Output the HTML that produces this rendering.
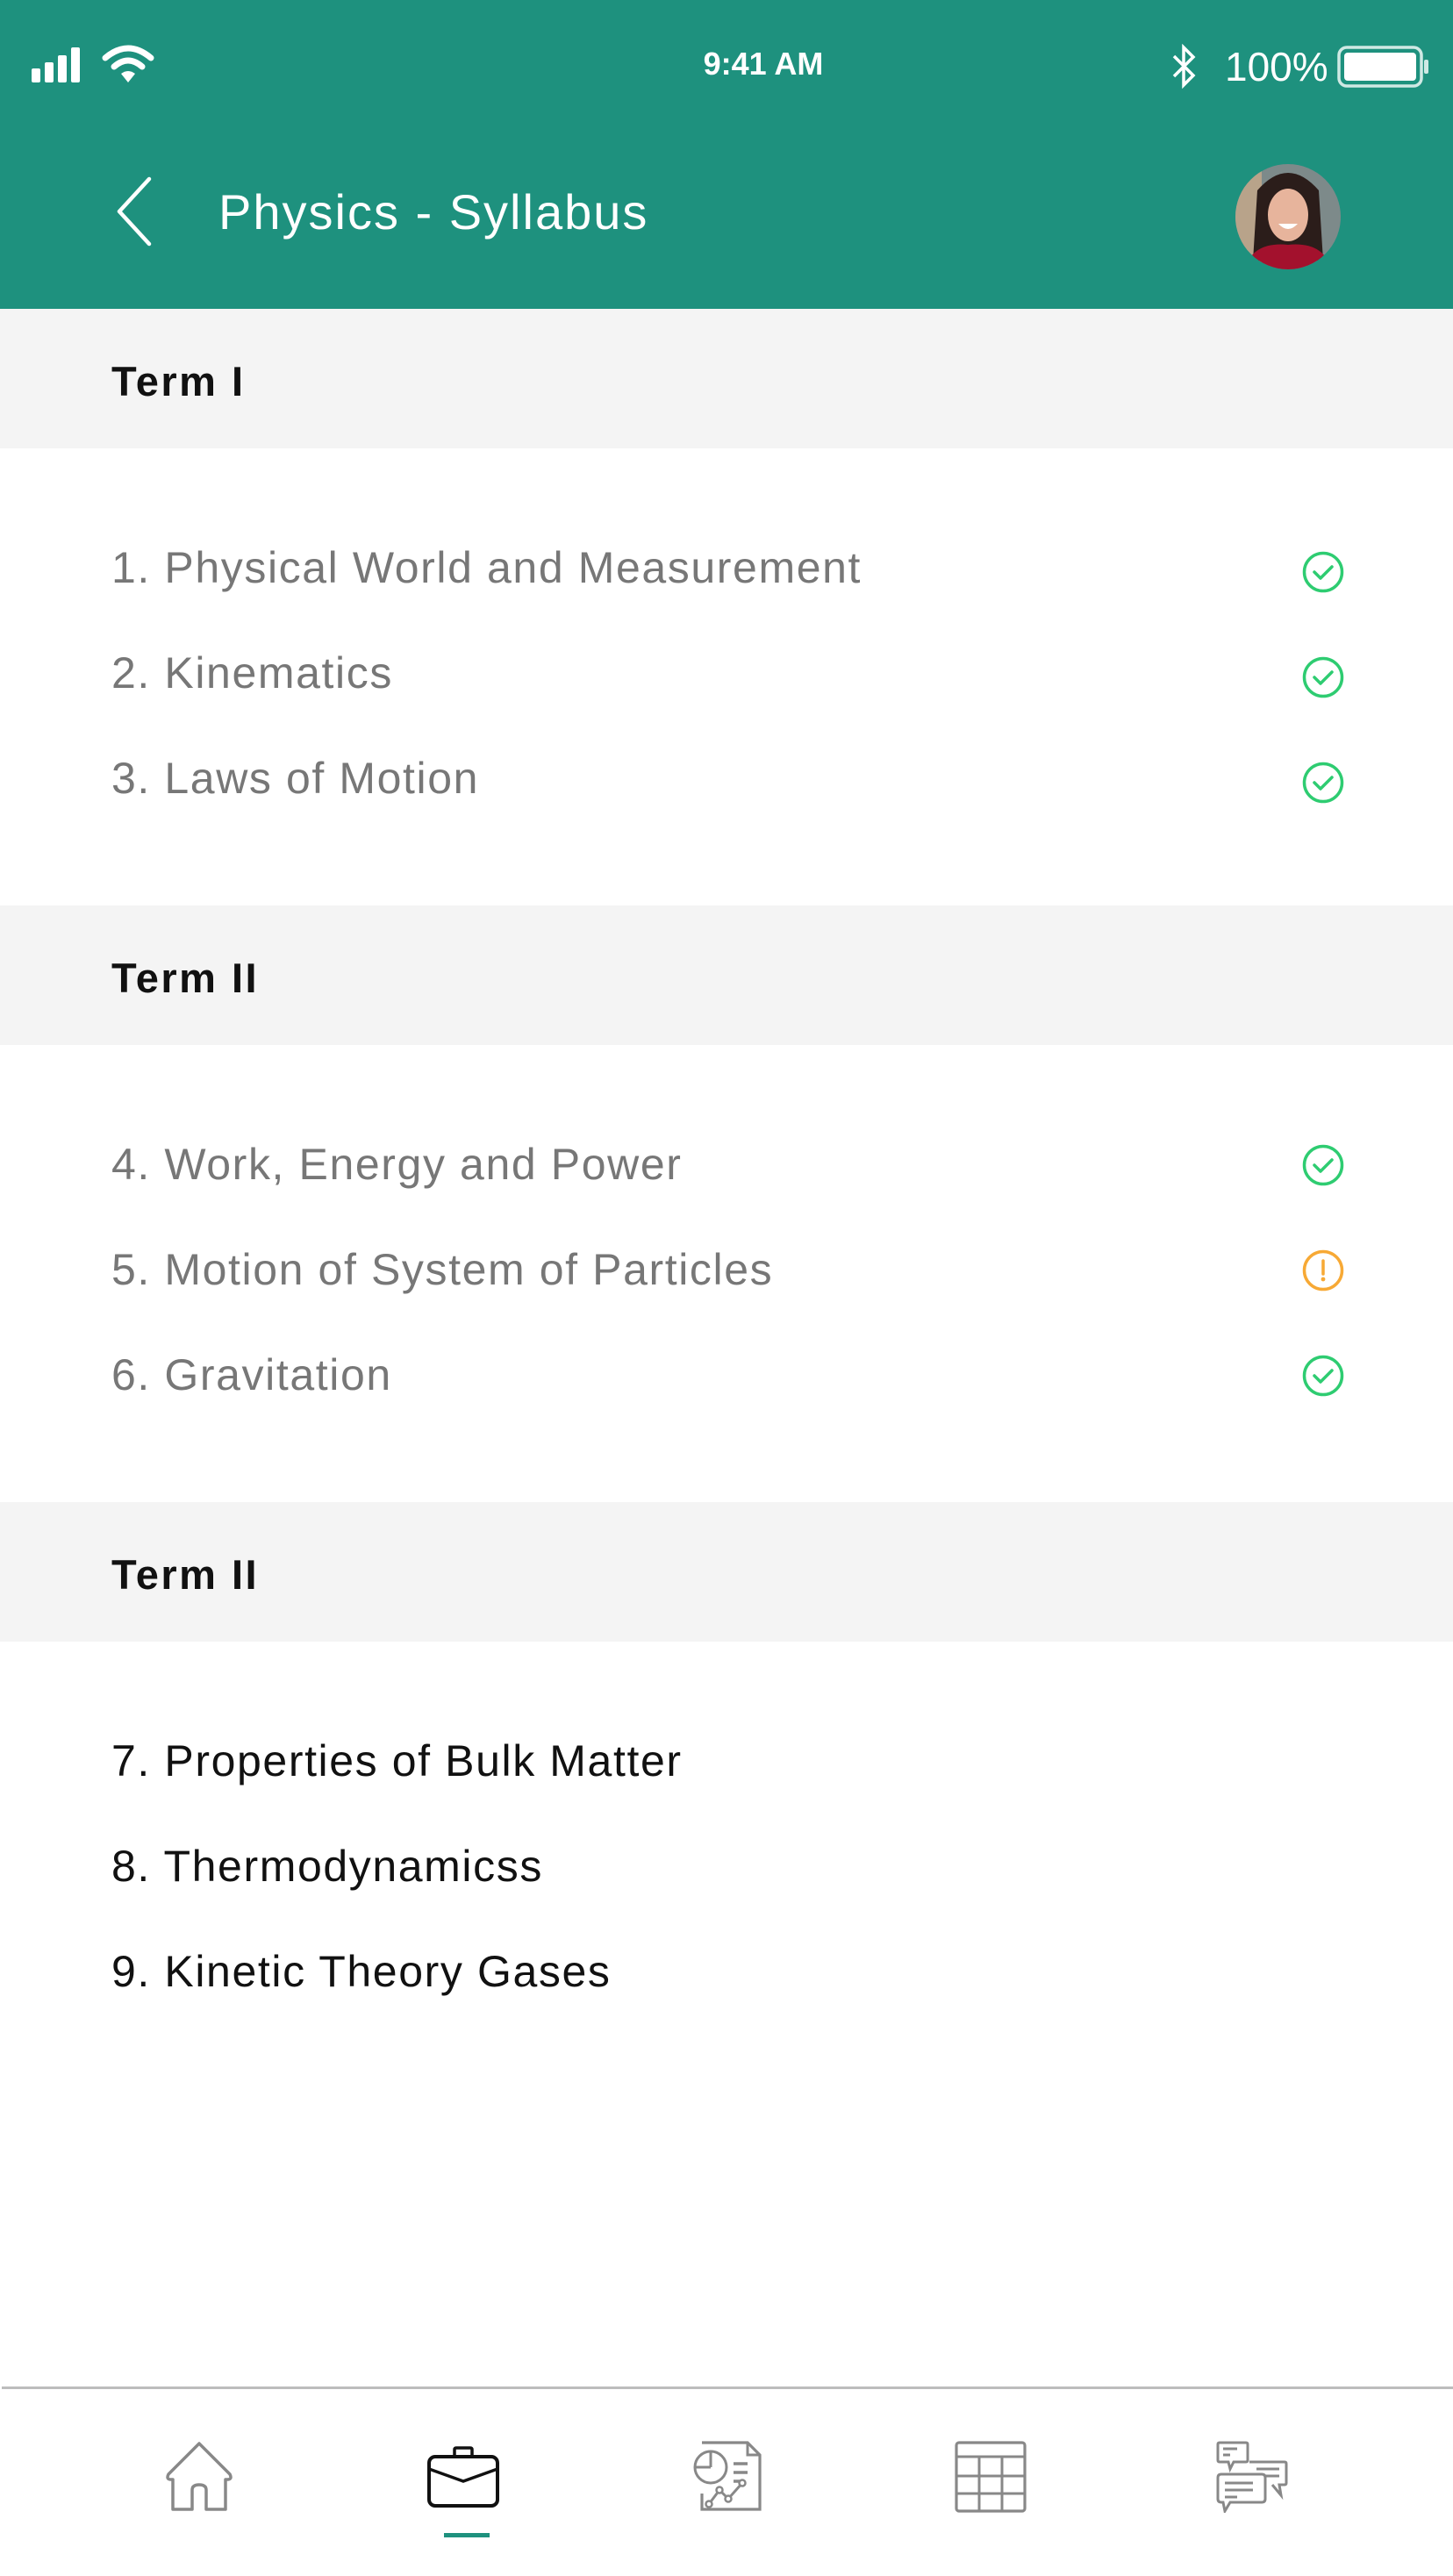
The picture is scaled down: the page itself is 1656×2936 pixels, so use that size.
<!DOCTYPE html>
<html><head><meta charset="utf-8">
<style>
*{margin:0;padding:0;box-sizing:border-box}
html,body{width:1656px;height:2936px;background:#fff;overflow:hidden;font-family:"Liberation Sans",sans-serif;position:relative}
.hdr{position:absolute;left:0;top:0;width:1656px;height:352px;background:#1e917e}
.abs{position:absolute}
.band{position:absolute;left:0;width:1656px;height:159px;background:#f4f4f4}
.term{position:absolute;left:127px;font-size:47px;font-weight:bold;color:#111;letter-spacing:2.5px;line-height:1}
.item{position:absolute;left:127px;font-size:50px;color:#777;letter-spacing:1.6px;line-height:1;white-space:nowrap}
.item.dark{color:#111}
.ic{position:absolute;left:1484px;width:48px;height:48px}
</style></head><body>
<div class="hdr"></div>
<svg class="abs" style="left:34px;top:52px" width="72" height="42" viewBox="0 0 72 42">
<rect x="2" y="26" width="10" height="16" rx="2" fill="#fff"/><rect x="17" y="19" width="10" height="23" rx="2" fill="#fff"/><rect x="32" y="11" width="10" height="31" rx="2" fill="#fff"/><rect x="47" y="2" width="10" height="40" rx="2" fill="#fff"/></svg>
<svg class="abs" style="left:116px;top:50px" width="60" height="46" viewBox="0 0 60 46">
<path d="M4 16 Q30 -6 56 16" stroke="#fff" stroke-width="7" fill="none" stroke-linecap="round"/>
<path d="M14 26 Q30 12 46 26" stroke="#fff" stroke-width="7" fill="none" stroke-linecap="round"/>
<path d="M22 34 L30 44 L38 34 Q30 28 22 34Z" fill="#fff"/></svg>
<div class="abs" style="left:780px;top:53px;font-size:36px;font-weight:bold;color:#fff;width:180px;text-align:center;line-height:40px">9:41 AM</div>
<svg class="abs" style="left:1334px;top:50px" width="30" height="52" viewBox="0 0 30 52">
<path d="M4 14 L26 36 L15 47 L15 4 L26 15 L4 37" stroke="#fff" stroke-width="3.5" fill="none"/></svg>
<div class="abs" style="left:1396px;top:50px;font-size:46px;color:#fff;line-height:52px">100%</div>
<svg class="abs" style="left:1524px;top:52px" width="106" height="50" viewBox="0 0 106 50">
<rect x="2" y="2" width="94" height="44" rx="9" fill="none" stroke="#cfe9e4" stroke-width="3.5"/>
<rect x="8" y="8" width="82" height="32" rx="4" fill="#fff"/>
<rect x="99" y="16" width="5" height="16" rx="2" fill="#cfe9e4"/></svg>
<svg class="abs" style="left:128px;top:200px" width="50" height="82" viewBox="0 0 50 82">
<path d="M42 4 L8 41 L42 78" stroke="#fff" stroke-width="4.5" fill="none" stroke-linecap="round" stroke-linejoin="round"/></svg>
<div class="abs" style="left:249px;top:212px;font-size:56px;color:#fff;letter-spacing:2px;line-height:60px">Physics - Syllabus</div>
<svg class="abs" style="left:1408px;top:187px" width="120" height="120" viewBox="0 0 120 120">
<defs><clipPath id="c"><circle cx="60" cy="60" r="60"/></clipPath></defs>
<g clip-path="url(#c)">
<rect width="120" height="120" fill="#7d8a8a"/>
<rect x="0" y="0" width="30" height="120" fill="#b8a38a"/>
<path d="M25 30 Q60 -10 95 30 L100 110 L20 110Z" fill="#2b1d1a"/>
<ellipse cx="60" cy="58" rx="23" ry="30" fill="#e7b49c"/>
<path d="M49 68 Q60 80 71 68Z" fill="#fff"/>
<path d="M10 120 Q20 88 60 92 Q100 88 110 120Z" fill="#a3112d"/>
</g></svg>
<div class="band" style="top:352px"></div>
<div class="term" style="top:411px">Term I</div>
<div class="item" style="top:622px">1. Physical World and Measurement</div>
<div class="item" style="top:742px">2. Kinematics</div>
<div class="item" style="top:862px">3. Laws of Motion</div>
<svg class="ic" style="top:628px" viewBox="0 0 48 48"><circle cx="24" cy="24" r="21.5" fill="none" stroke="#2ecc71" stroke-width="3.5"/><path d="M14 24 L21 31 L34 18" fill="none" stroke="#2ecc71" stroke-width="3.5" stroke-linecap="round" stroke-linejoin="round"/></svg>
<svg class="ic" style="top:748px" viewBox="0 0 48 48"><circle cx="24" cy="24" r="21.5" fill="none" stroke="#2ecc71" stroke-width="3.5"/><path d="M14 24 L21 31 L34 18" fill="none" stroke="#2ecc71" stroke-width="3.5" stroke-linecap="round" stroke-linejoin="round"/></svg>
<svg class="ic" style="top:868px" viewBox="0 0 48 48"><circle cx="24" cy="24" r="21.5" fill="none" stroke="#2ecc71" stroke-width="3.5"/><path d="M14 24 L21 31 L34 18" fill="none" stroke="#2ecc71" stroke-width="3.5" stroke-linecap="round" stroke-linejoin="round"/></svg>
<div class="band" style="top:1032px"></div>
<div class="term" style="top:1091px">Term II</div>
<div class="item" style="top:1302px">4. Work, Energy and Power</div>
<div class="item" style="top:1422px">5. Motion of System of Particles</div>
<div class="item" style="top:1542px">6. Gravitation</div>
<svg class="ic" style="top:1304px" viewBox="0 0 48 48"><circle cx="24" cy="24" r="21.5" fill="none" stroke="#2ecc71" stroke-width="3.5"/><path d="M14 24 L21 31 L34 18" fill="none" stroke="#2ecc71" stroke-width="3.5" stroke-linecap="round" stroke-linejoin="round"/></svg>
<svg class="ic" style="top:1424px" viewBox="0 0 48 48"><circle cx="24" cy="24" r="21.5" fill="none" stroke="#f7a935" stroke-width="3.5"/><path d="M24 13 L24 28" stroke="#f7a935" stroke-width="3.5" stroke-linecap="round"/><circle cx="24" cy="34" r="2.4" fill="#f7a935"/></svg>
<svg class="ic" style="top:1544px" viewBox="0 0 48 48"><circle cx="24" cy="24" r="21.5" fill="none" stroke="#2ecc71" stroke-width="3.5"/><path d="M14 24 L21 31 L34 18" fill="none" stroke="#2ecc71" stroke-width="3.5" stroke-linecap="round" stroke-linejoin="round"/></svg>
<div class="band" style="top:1712px"></div>
<div class="term" style="top:1771px">Term II</div>
<div class="item dark" style="top:1982px">7. Properties of Bulk Matter</div>
<div class="item dark" style="top:2102px">8. Thermodynamicss</div>
<div class="item dark" style="top:2222px">9. Kinetic Theory Gases</div>
<div class="abs" style="left:2px;top:2720px;width:1654px;height:3px;background:#bdbdbd"></div>
<svg class="abs" style="left:186px;top:2782px" width="82" height="82" viewBox="0 0 82 82">
<path d="M41 3 L6 38 Q3 44 9 44 L11 44 L11 78 L33 78 L33 56 Q33 50 41 50 Q49 50 49 56 L49 78 L71 78 L71 44 L73 44 Q79 44 76 38Z" fill="none" stroke="#888" stroke-width="3.5" stroke-linejoin="round"/></svg>
<svg class="abs" style="left:486px;top:2788px" width="84" height="72" viewBox="0 0 84 72">
<path d="M32 12 L32 4 Q32 2 34 2 L50 2 Q52 2 52 4 L52 12" fill="none" stroke="#111" stroke-width="3.5"/>
<rect x="3" y="12" width="78" height="56" rx="7" fill="none" stroke="#111" stroke-width="4"/>
<path d="M3 26 L42 40 L81 26" fill="none" stroke="#111" stroke-width="3.5"/></svg>
<div class="abs" style="left:506px;top:2887px;width:52px;height:5px;background:#1e917e"></div>
<svg class="abs" style="left:786px;top:2782px" width="84" height="82" viewBox="0 0 84 82">
<path d="M14 2 L66 2 L80 16 L80 78 L14 78 L14 60" fill="none" stroke="#888" stroke-width="3.2"/>
<path d="M66 2 L66 16 L80 16" fill="none" stroke="#888" stroke-width="3"/>
<circle cx="24" cy="30" r="18" fill="none" stroke="#888" stroke-width="3"/>
<path d="M24 30 L24 12 M24 30 L6 30" stroke="#888" stroke-width="3"/>
<path d="M50 26 L66 26 M50 36 L66 36 M50 46 L58 46" stroke="#888" stroke-width="3.5"/>
<path d="M22 72 L34 56 L44 66 L60 48" fill="none" stroke="#888" stroke-width="3"/>
<circle cx="22" cy="72" r="3.5" fill="#fff" stroke="#888" stroke-width="2.5"/><circle cx="34" cy="56" r="3.5" fill="#fff" stroke="#888" stroke-width="2.5"/><circle cx="44" cy="66" r="3.5" fill="#fff" stroke="#888" stroke-width="2.5"/><circle cx="60" cy="48" r="3.5" fill="#fff" stroke="#888" stroke-width="2.5"/></svg>
<svg class="abs" style="left:1088px;top:2782px" width="82" height="82" viewBox="0 0 82 82">
<rect x="2" y="2" width="78" height="78" rx="3" fill="none" stroke="#888" stroke-width="3.2"/>
<path d="M2 18 L80 18 M2 40 L80 40 M2 60 L80 60 M28 18 L28 80 M54 18 L54 80" stroke="#888" stroke-width="3"/></svg>
<svg class="abs" style="left:1386px;top:2782px" width="84" height="82" viewBox="0 0 84 82">
<path d="M4 2 L34 2 Q36 2 36 4 L36 22 Q36 24 34 24 L20 24 L16 32 L14 24 L4 24 Q2 24 2 22 L2 4 Q2 2 4 2Z" fill="none" stroke="#888" stroke-width="3"/>
<path d="M8 9 L24 9 M8 16 L16 16" stroke="#888" stroke-width="3"/>
<path d="M38 24 L78 24 Q80 24 80 26 L80 48 Q80 50 78 50 L72 50 L74 62 L64 50" fill="none" stroke="#888" stroke-width="3"/>
<path d="M46 32 L72 32 M56 40 L72 40" stroke="#888" stroke-width="3"/>
<path d="M6 38 L52 38 Q56 38 56 42 L56 66 Q56 70 52 70 L16 70 L10 80 L8 70 L6 70 Q2 70 2 66 L2 42 Q2 38 6 38Z" fill="#fff" stroke="#888" stroke-width="3"/>
<path d="M10 48 L42 48 M10 56 L42 56 M10 64 L24 64" stroke="#888" stroke-width="3"/></svg>
</body></html>
